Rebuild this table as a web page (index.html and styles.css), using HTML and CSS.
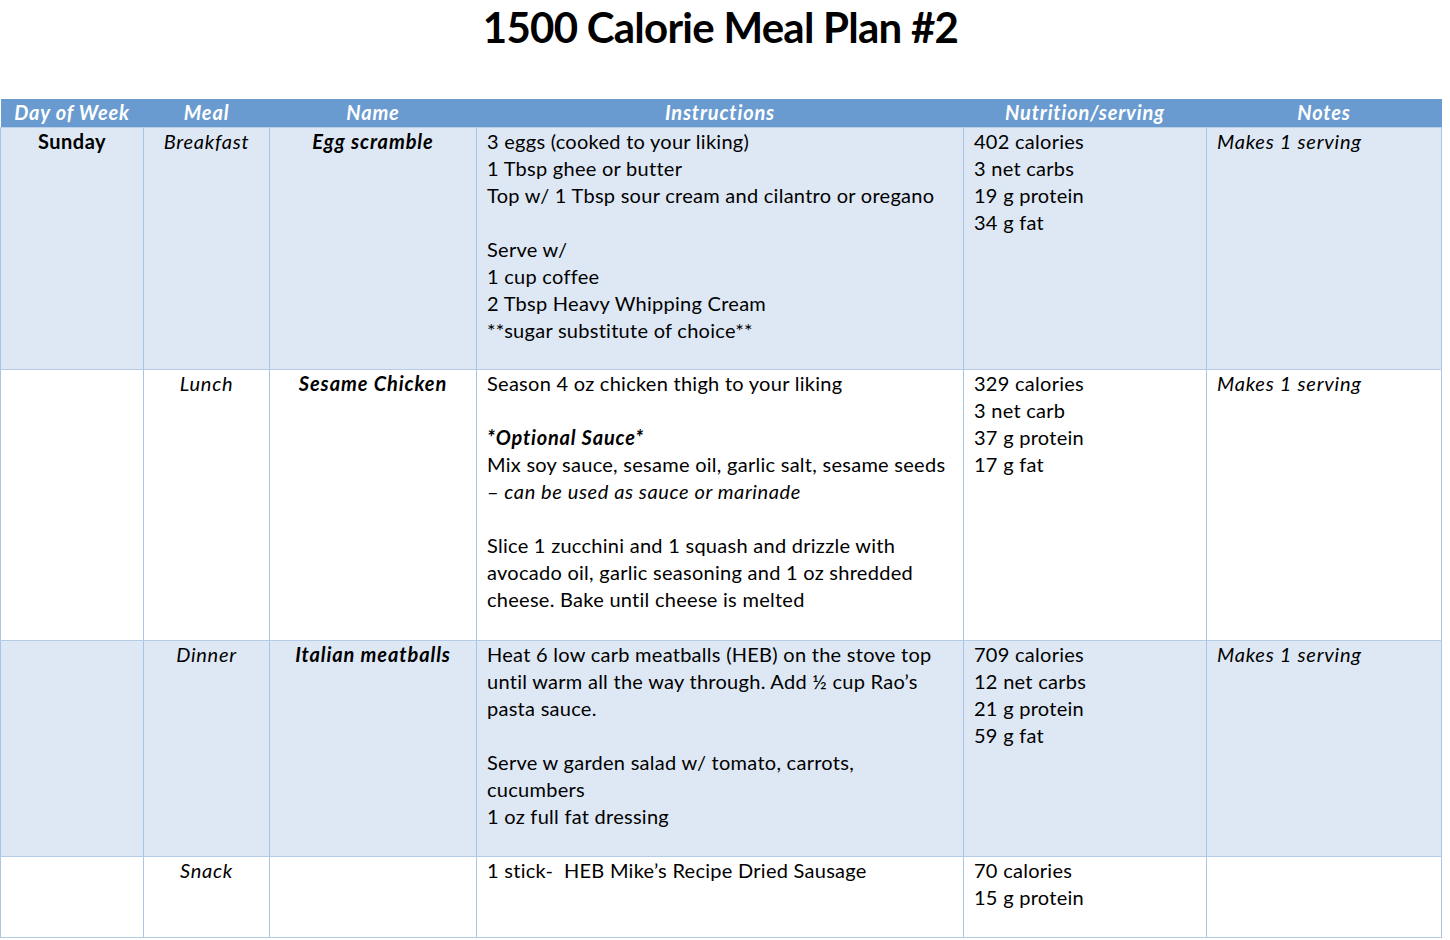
FILE: index.html
```html
<!DOCTYPE html>
<html>
<head>
<meta charset="utf-8">
<link rel="stylesheet" href="styles.css">
</head>
<body>
<div class="page">
  <h1 class="title">1500 Calorie Meal Plan #2</h1>
  <table class="plan">
    <colgroup>
      <col class="c-day"><col class="c-meal"><col class="c-name"><col class="c-ins"><col class="c-nut"><col class="c-notes">
    </colgroup>
    <thead>
      <tr class="head">
        <th>Day of Week</th><th>Meal</th><th>Name</th><th>Instructions</th><th>Nutrition/serving</th><th>Notes</th>
      </tr>
    </thead>
    <tbody>
      <tr class="r1 shade">
        <td class="day">Sunday</td>
        <td class="meal">Breakfast</td>
        <td class="name">Egg scramble</td>
        <td class="ins">
          <div>3 eggs (cooked to your liking)</div>
          <div>1 Tbsp ghee or butter</div>
          <div>Top w/ 1 Tbsp sour cream and cilantro or oregano</div>
          <div class="blank"></div>
          <div>Serve w/</div>
          <div>1 cup coffee</div>
          <div>2 Tbsp Heavy Whipping Cream</div>
          <div>**sugar substitute of choice**</div>
        </td>
        <td class="nut">
          <div>402 calories</div><div>3 net carbs</div><div>19 g protein</div><div>34 g fat</div>
        </td>
        <td class="notes">Makes 1 serving</td>
      </tr>
      <tr class="r2">
        <td class="day"></td>
        <td class="meal">Lunch</td>
        <td class="name">Sesame Chicken</td>
        <td class="ins">
          <div>Season 4 oz chicken thigh to your liking</div>
          <div class="blank"></div>
          <div class="bi">*Optional Sauce*</div>
          <div>Mix soy sauce, sesame oil, garlic salt, sesame seeds</div>
          <div>– <em>can be used as sauce or marinade</em></div>
          <div class="blank"></div>
          <div>Slice 1 zucchini and 1 squash and drizzle with</div>
          <div>avocado oil, garlic seasoning and 1 oz shredded</div>
          <div>cheese. Bake until cheese is melted</div>
        </td>
        <td class="nut">
          <div>329 calories</div><div>3 net carb</div><div>37 g protein</div><div>17 g fat</div>
        </td>
        <td class="notes">Makes 1 serving</td>
      </tr>
      <tr class="r3 shade">
        <td class="day"></td>
        <td class="meal">Dinner</td>
        <td class="name">Italian meatballs</td>
        <td class="ins">
          <div>Heat 6 low carb meatballs (HEB) on the stove top</div>
          <div>until warm all the way through. Add ½ cup Rao’s</div>
          <div>pasta sauce.</div>
          <div class="blank"></div>
          <div>Serve w garden salad w/ tomato, carrots,</div>
          <div>cucumbers</div>
          <div>1 oz full fat dressing</div>
        </td>
        <td class="nut">
          <div>709 calories</div><div>12 net carbs</div><div>21 g protein</div><div>59 g fat</div>
        </td>
        <td class="notes">Makes 1 serving</td>
      </tr>
      <tr class="r4">
        <td class="day"></td>
        <td class="meal">Snack</td>
        <td class="name"></td>
        <td class="ins">
          <div>1 stick-&nbsp; HEB Mike’s Recipe Dried Sausage</div>
        </td>
        <td class="nut">
          <div>70 calories</div><div>15 g protein</div>
        </td>
        <td class="notes"></td>
      </tr>
    </tbody>
  </table>
</div>
</body>
</html>
```
FILE: styles.css
```css
html, body {
  margin: 0;
  padding: 0;
  background: #ffffff;
}
body {
  font-family: Lato, "Open Sans", sans-serif;
  color: #000;
}
.page {
  width: 1441px;
}
.title {
  margin: 0;
  height: 99px;
  font-size: 42px;
  line-height: 54px;
  font-weight: 700;
  text-align: center;
  letter-spacing: -0.75px;
}
.plan {
  width: 1441px;
  table-layout: fixed;
  border-collapse: collapse;
  font-size: 20px;
  line-height: 27px;
  letter-spacing: 0.27px;
}
.c-day { width: 143px; }
.c-meal { width: 126px; }
.c-name { width: 207px; }
.c-ins { width: 487px; }
.c-nut { width: 243px; }
.c-notes { width: 235px; }

.head {
  height: 28px;
  background: #6a9bd0;
}
.head th {
  color: #fff;
  font-weight: 700;
  font-style: italic;
  letter-spacing: 0.8px;
  text-align: center;
  padding: 0;
  vertical-align: middle;
  border-bottom: 1px solid #b9cfea;
}
.plan td {
  vertical-align: top;
  padding: 0 10px;
  border-left: 1px solid #a9c4e5;
  border-right: 1px solid #a9c4e5;
  border-bottom: 1px solid #b5cce9;
  white-space: nowrap;
}
.shade td { background: #dee8f4; }
.r1 { height: 242px; }
.r2 { height: 271px; }
.r3 { height: 216px; }
.r4 { height: 81px; }

.day { text-align: center; font-weight: 700; letter-spacing: 0.5px; }
.meal { text-align: center; font-style: italic; letter-spacing: 0.75px; }
.name { text-align: center; font-weight: 700; font-style: italic; letter-spacing: 0.9px; }
.plan td.notes { font-style: italic; letter-spacing: 0.75px; }
.ins .blank { height: 27px; }
.bi { font-weight: 700; font-style: italic; letter-spacing: 0.8px; }
.ins em { font-style: italic; letter-spacing: 0.6px; }
```
